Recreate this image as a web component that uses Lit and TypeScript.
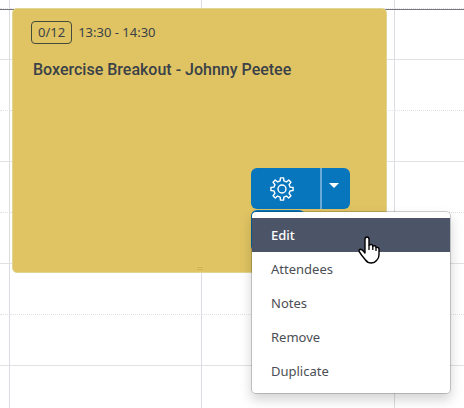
import { LitElement, html, css, svg } from "lit";
import { customElement, state } from "lit/decorators.js";

// Outline of an eight-toothed cog, centred on (12, 12).
const cogPath = (() => {
  const points: string[] = [];
  const put = (r: number, deg: number) => {
    const a = (deg * Math.PI) / 180;
    points.push(`${(12 + r * Math.sin(a)).toFixed(2)} ${(12 - r * Math.cos(a)).toFixed(2)}`);
  };
  for (let i = 0; i < 8; i++) {
    const base = i * 45;
    put(8.3, base - 13);
    put(11.2, base - 8);
    put(11.2, base + 8);
    put(8.3, base + 13);
  }
  return `M${points.join("L")}Z`;
})();

const cogIcon = svg`
  <path d=${cogPath} fill="none" stroke="currentColor" stroke-width="1.4" stroke-linejoin="round"/>
  <circle cx="12" cy="12" r="4" fill="none" stroke="currentColor" stroke-width="1.4"/>`;

@customElement("event-actions")
export class EventActions extends LitElement {
  @state() private active = "Edit";
  private items = ["Edit", "Attendees", "Notes", "Remove", "Duplicate"];

  static styles = css`
    :host { display: block; position: relative; }
    button { font: inherit; border: 0; margin: 0; padding: 0; cursor: pointer; }
    .split { display: flex; height: 41px; border-radius: 6px; overflow: hidden; }
    .split button { display: flex; align-items: center; justify-content: center; background: #0876bd; color: #fff; }
    .split .main { width: 69px; padding-right: 8px; }
    .split .toggle { width: 30px; padding: 0 4px 6px 0; border-left: 2px solid #6aabd6; }
    .caret { width: 10px; height: 5px; }
    .below { position: absolute; top: 42px; left: 0; width: 54px; height: 42px; border-radius: 6px; background: #0876bd; }
    .menu {
      position: absolute; top: 43px; left: 0; width: 200px; box-sizing: border-box;
      margin: 0; padding: 6px 0 5px; list-style: none; background: #fff; background-clip: padding-box;
      border: 1px solid rgba(0, 0, 0, 0.18); border-radius: 5px;
      box-shadow: 0 6px 12px rgba(0, 0, 0, 0.17);
    }
    .item { display: block; width: 100%; height: 34px; padding: 0 19px; text-align: left; background: none; color: #4b4e54; font-size: 13px; line-height: 34px; }
    .item.active { background: #4b5567; color: #fff; font-weight: 500; }
    .pointer { position: absolute; top: 68px; left: 107px; width: 22px; height: 28px; pointer-events: none; }
  `;

  render() {
    return html`
      <div class="split">
        <button class="main" aria-label="Settings"><svg width="24" height="24" viewBox="0 0 24 24">${cogIcon}</svg></button>
        <button class="toggle" aria-label="More actions" aria-expanded="true">
          <svg class="caret" viewBox="0 0 10 5"><path d="M0 0H10L5 5Z" fill="currentColor"/></svg>
        </button>
      </div>
      <div class="below"></div>
      <ul class="menu">
        ${this.items.map((name) => html`<li>
          <button class="item ${name === this.active ? "active" : ""}" @mouseenter=${() => (this.active = name)}>${name}</button>
        </li>`)}
      </ul>
      <svg class="pointer" viewBox="0 0 22 28">
        <path d="M7 17V3.200Q7 1 9 1T11 3.200V9Q14.500 7.500 14.800 10.200Q18 9 18 11.500Q21 10.800 21 13.500V19Q21 22 18.500 24.500Q16.500 27 13.500 27Q9.500 27 7.500 24L3.500 19L1.200 15.500Q.5 13.200 2.800 13.200Q4.500 13.500 7 17Z" fill="#fff" stroke="#000" stroke-width="1.4" stroke-linejoin="round"/>
        <path d="M11 9V14M14.800 10V14M18 11.500V15" stroke="#000" stroke-width="1.3"/>
      </svg>`;
  }
}

@customElement("app-root")
export class AppRoot extends LitElement {
  static styles = css`
    :host { display: block; font-family: "Noto Sans", sans-serif; color: #3a4148; }
    .calendar {
      position: relative; display: grid; min-height: 100vh; background: #fff; overflow: hidden;
      grid-template-columns: 10px 192fr 193fr 69fr;
      grid-template-rows: 9px repeat(7, 51px) 1fr;
    }
    .cell { border-right: 1px solid #dcdce2; border-bottom: 1px solid #e2e2e6; }
    .cell.half { border-bottom-style: dotted; }
    .cell.last { border-bottom: 0; }
    .cell.edge { border-right: 0; }
    .now { position: absolute; top: 9px; left: 0; right: 0; height: 1px; background: #77777b; }
    .event {
      grid-area: 1 / 2 / 8 / 4; position: relative; box-sizing: border-box;
      display: flex; flex-direction: column; align-items: flex-start;
      height: 265px; margin: 8px 8px 0 2px; padding: 12px 36px 63px 18px;
      background: #e0c463; border: 1px solid #e0d694; border-radius: 5px;
    }
    .meta { display: flex; align-items: center; gap: 6px; font-size: 13px; line-height: 21px; }
    .count { border: 1px solid #444a3c; border-radius: 4px; padding: 0 6px; }
    .title { margin: 16px 0 0 2px; font-family: Roboto, "Noto Sans", sans-serif; font-size: 16px; line-height: 20px; font-weight: 500; white-space: nowrap; }
    event-actions { margin-top: auto; align-self: flex-end; }
    .grip { position: absolute; bottom: 2px; left: 50%; width: 6px; height: 1px; margin-left: -3px; border: solid #cfb454; border-width: 1px 0; }
  `;

  render() {
    const cells = [];
    for (let row = 0; row < 9; row++) {
      for (let col = 0; col < 4; col++) {
        cells.push(html`<div class="cell ${row % 2 === 0 ? "half" : ""} ${row === 8 ? "last" : ""} ${col === 3 ? "edge" : ""}"
          style="grid-area: ${row + 1} / ${col + 1}"></div>`);
      }
    }
    return html`
      <main class="calendar">
        ${cells}
        <div class="now"></div>
        <article class="event">
          <div class="meta"><span class="count">0/12</span><time>13:30 - 14:30</time></div>
          <h2 class="title">Boxercise Breakout - Johnny Peetee</h2>
          <event-actions></event-actions>
          <div class="grip"></div>
        </article>
      </main>`;
  }
}
